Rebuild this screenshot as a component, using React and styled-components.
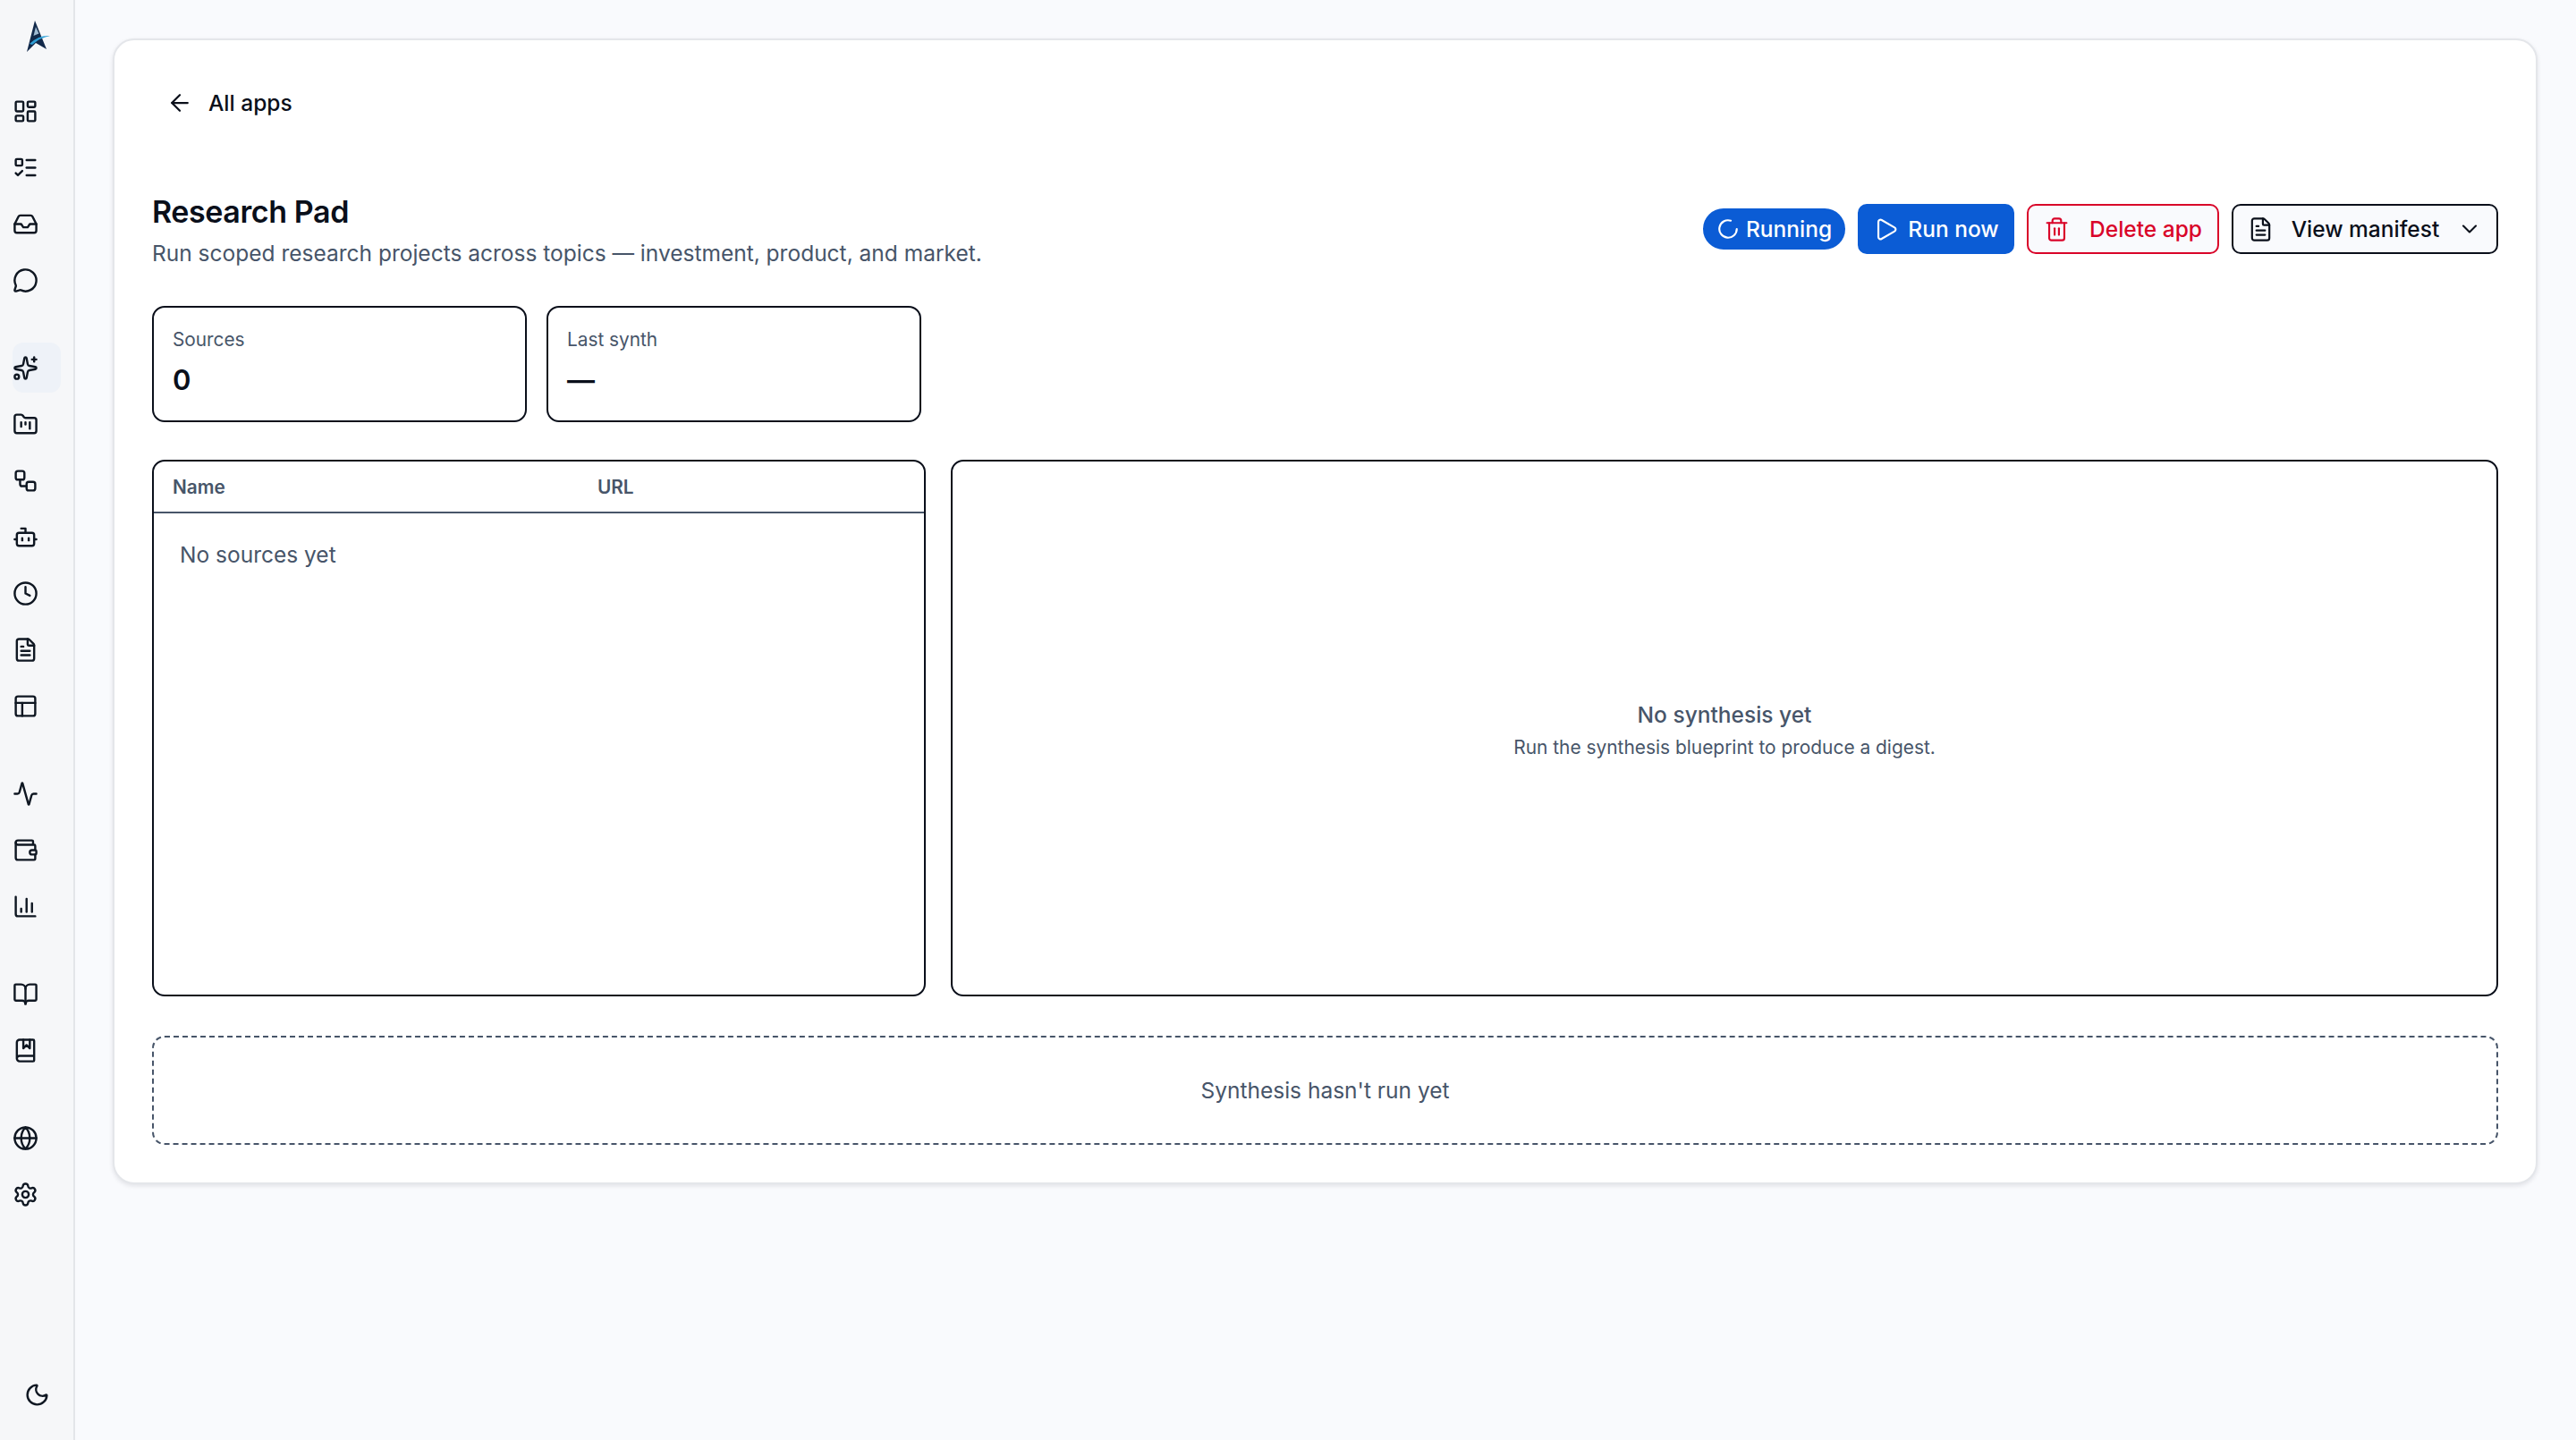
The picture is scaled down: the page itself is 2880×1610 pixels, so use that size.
import React from "react";
import styled, { createGlobalStyle } from "styled-components";
import {
  Activity,
  ArrowLeft,
  Bot,
  BookMarked,
  BookOpen,
  ChartColumn,
  ChevronDown,
  Clock,
  FileText,
  FolderKanban,
  Globe,
  Inbox,
  LayoutDashboard,
  ListTodo,
  LoaderCircle,
  MessageCircle,
  Moon,
  PanelsTopLeft,
  Play,
  Settings,
  Sparkles,
  Trash2,
  Wallet,
  Workflow,
} from "lucide-react";

const GlobalStyle = createGlobalStyle`
  html, body {
    margin: 0;
    padding: 0;
    background: #f9fafd;
  }
  * {
    box-sizing: border-box;
  }
  body {
    font-family: "Inter", "Liberation Sans", sans-serif;
    color: #0a0f1a;
  }
`;

const Shell = styled.div`
  display: flex;
  width: 2880px;
  height: 1610px;
  overflow: hidden;
`;

const Sidebar = styled.aside`
  flex: 0 0 84px;
  display: flex;
  flex-direction: column;
  background: #f6f7f9;
  border-right: 2px solid #e3e5e9;
`;

const LogoWrap = styled.div`
  height: 96px;
  padding: 22px 0 0 27px;
`;

const Nav = styled.nav`
  display: flex;
  flex-direction: column;
  flex: 1;
  padding-left: 14px;
`;

const NavGroup = styled.div`
  display: flex;
  flex-direction: column;
  gap: 7px;
  margin-bottom: 42px;
`;

const NavItem = styled.div`
  width: 54px;
  height: 56px;
  display: flex;
  align-items: center;
  color: #0f1722;
  border-radius: 12px;
  background: ${({ $active }) => ($active ? "#eef2f8" : "transparent")};
`;

const ThemeToggle = styled.div`
  display: flex;
  padding: 0 0 36px 27px;
  color: #0f1722;
`;

const Main = styled.main`
  flex: 1;
  padding: 43px 43px 0 42px;
`;

const Card = styled.div`
  background: #fff;
  border: 2px solid #e4e6ea;
  border-radius: 24px;
  box-shadow: 0 2px 5px rgba(15, 23, 42, 0.1);
  padding: 42px;
  height: 1281px;
`;

const BackLink = styled.div`
  display: flex;
  align-items: center;
  gap: 17px;
  height: 56px;
  padding-left: 16px;
  font-size: 24.5px;
  font-weight: 500;
  color: #0a0f1a;
`;

const Header = styled.div`
  display: flex;
  justify-content: space-between;
  align-items: flex-start;
  margin-top: 72px;
`;

const TitleBlock = styled.div`
  display: flex;
  flex-direction: column;
  gap: 6px;
`;

const Title = styled.h1`
  margin: 0;
  font-size: 34px;
  line-height: 44px;
  font-weight: 600;
  letter-spacing: -0.4px;
  color: #0a0f1a;
`;

const Subtitle = styled.p`
  margin: 0;
  font-size: 24.5px;
  line-height: 36px;
  color: #475569;
`;

const Actions = styled.div`
  display: flex;
  align-items: center;
  gap: 14px;
  margin-top: 13px;
`;

const Button = styled.button`
  display: inline-flex;
  align-items: center;
  justify-content: center;
  gap: ${({ $gap }) => $gap || 18}px;
  width: ${({ $w }) => $w}px;
  height: 56px;
  padding: 0;
  font-family: inherit;
  font-size: 24.5px;
  font-weight: 500;
  border-radius: 10px;
  background: #f9fafd;
  border: 2px solid #0a0f1a;
  color: #0a0f1a;
`;

const PrimaryButton = styled(Button)`
  background: #0b5cd5;
  border-color: #0b5cd5;
  color: #fff;
`;

const StatusPill = styled(PrimaryButton)`
  height: 46px;
  border-radius: 23px;
`;

const DangerButton = styled(Button)`
  border-color: #d90429;
  color: #d90429;
`;

const Stats = styled.div`
  display: flex;
  gap: 22px;
  margin-top: 41px;
`;

const StatCard = styled.div`
  width: 419px;
  height: 130px;
  border: 2px solid #0a0f1a;
  border-radius: 14px;
  padding: 20px 21px;
`;

const StatLabel = styled.div`
  font-size: 20.8px;
  line-height: 32px;
  color: #475569;
`;

const StatValue = styled.div`
  margin-top: 9px;
  font-size: 31px;
  line-height: 40px;
  font-weight: 600;
  color: #0a0f1a;
`;

const Panels = styled.div`
  display: grid;
  grid-template-columns: 1fr 2fr;
  gap: 28px;
  margin-top: 42px;
`;

const Panel = styled.section`
  height: 600px;
  border: 2px solid #0a0f1a;
  border-radius: 14px;
  overflow: hidden;
`;

const TableHead = styled.div`
  display: grid;
  grid-template-columns: 475px 1fr;
  align-items: center;
  height: 58px;
  padding: 0 21px;
  border-bottom: 2px solid #475569;
  font-size: 20.8px;
  font-weight: 600;
  color: #475569;
`;

const TableEmpty = styled.div`
  padding: 28px 29px;
  font-size: 24.5px;
  line-height: 36px;
  color: #475569;
`;

const EmptyState = styled(Panel)`
  display: flex;
  flex-direction: column;
  align-items: center;
  justify-content: center;
  padding-top: 4px;
  color: #475569;
`;

const EmptyTitle = styled.div`
  font-size: 24.5px;
  line-height: 36px;
  font-weight: 500;
`;

const EmptyText = styled.div`
  margin-top: 3px;
  font-size: 20.9px;
  line-height: 32px;
`;

const Notice = styled.div`
  display: flex;
  align-items: center;
  justify-content: center;
  height: 122px;
  margin-top: 44px;
  border: 2px dashed #475569;
  border-radius: 14px;
  font-size: 24.5px;
  color: #475569;
`;

const navGroups = [
  [LayoutDashboard, ListTodo, Inbox, MessageCircle],
  [Sparkles, FolderKanban, Workflow, Bot, Clock, FileText, PanelsTopLeft],
  [Activity, Wallet, ChartColumn],
  [BookOpen, BookMarked],
  [Globe, Settings],
];

const Logo = () => (
  <svg width="30" height="38" viewBox="0 0 30 38">
    <path d="M12 1 L25 33 L13 26 L3 36 Z" fill="#12294a" />
    <path d="M13 8 L10.5 18 L16.5 15.5 Z" fill="#9fbbd2" />
    <path d="M6 27 Q 16 17 29 18 Q 18 20 9 28 Z" fill="#2f9fd6" />
  </svg>
);

export default function App() {
  return (
    <Shell>
      <GlobalStyle />
      <Sidebar>
        <LogoWrap>
          <Logo />
        </LogoWrap>
        <Nav>
          {navGroups.map((group, g) => (
            <NavGroup key={g}>
              {group.map((Icon, i) => (
                <NavItem key={i} $active={Icon === Sparkles}>
                  <Icon size={29} strokeWidth={2} />
                </NavItem>
              ))}
            </NavGroup>
          ))}
        </Nav>
        <ThemeToggle>
          <Moon size={29} strokeWidth={2} />
        </ThemeToggle>
      </Sidebar>
      <Main>
        <Card>
          <BackLink>
            <ArrowLeft size={30} strokeWidth={1.8} />
            All apps
          </BackLink>
          <Header>
            <TitleBlock>
              <Title>Research Pad</Title>
              <Subtitle>
                Run scoped research projects across topics — investment, product, and market.
              </Subtitle>
            </TitleBlock>
            <Actions>
              <StatusPill $w={159} $gap={7}>
                <LoaderCircle size={26} strokeWidth={2} />
                Running
              </StatusPill>
              <PrimaryButton $w={175} $gap={10}>
                <Play size={29} strokeWidth={1.8} />
                Run now
              </PrimaryButton>
              <DangerButton $w={215} $gap={22}>
                <Trash2 size={29} strokeWidth={1.8} />
                Delete app
              </DangerButton>
              <Button $w={298} $gap={20}>
                <FileText size={29} strokeWidth={1.8} />
                View manifest
                <ChevronDown size={28} strokeWidth={1.8} />
              </Button>
            </Actions>
          </Header>
          <Stats>
            <StatCard>
              <StatLabel>Sources</StatLabel>
              <StatValue>0</StatValue>
            </StatCard>
            <StatCard>
              <StatLabel>Last synth</StatLabel>
              <StatValue>—</StatValue>
            </StatCard>
          </Stats>
          <Panels>
            <Panel>
              <TableHead>
                <span>Name</span>
                <span>URL</span>
              </TableHead>
              <TableEmpty>No sources yet</TableEmpty>
            </Panel>
            <EmptyState as="section">
              <EmptyTitle>No synthesis yet</EmptyTitle>
              <EmptyText>Run the synthesis blueprint to produce a digest.</EmptyText>
            </EmptyState>
          </Panels>
          <Notice>Synthesis hasn't run yet</Notice>
        </Card>
      </Main>
    </Shell>
  );
}
